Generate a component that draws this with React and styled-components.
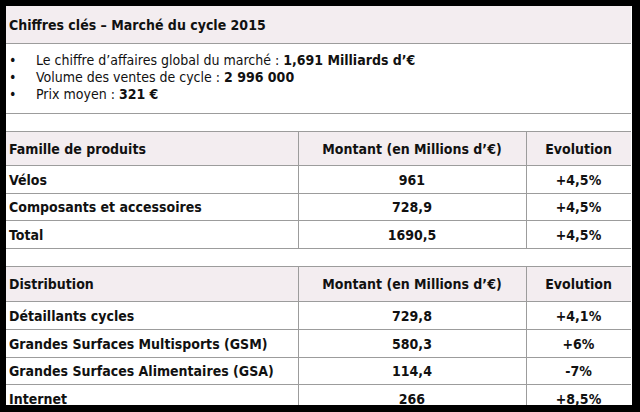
import React from "react";
import styled, { createGlobalStyle } from "styled-components";

const GlobalStyle = createGlobalStyle`
  html, body {
    margin: 0;
    padding: 0;
    background: #000;
  }
  body {
    width: 640px;
    height: 412px;
    overflow: hidden;
  }
`;

const Frame = styled.div`
  padding: 6px 8px 7px 6px;
  background: #000;
  height: 412px;
  box-sizing: border-box;
`;

const Clip = styled.div`
  height: 399px;
  overflow: hidden;
  background: #fff;
`;

const Sheet = styled.table`
  width: 626px;
  border-collapse: collapse;
  table-layout: fixed;
  background: #fff;
  font-family: "DejaVu Sans Condensed", "DejaVu Sans", Tahoma, sans-serif;
  font-size: 14px;
  color: #111;
`;

const Cell = styled.td`
  border: 1px solid #9c9c9c;
  padding: 0 3px;
  height: ${(p) => p.$h}px;
  font-weight: bold;
  text-align: ${(p) => (p.$center ? "center" : "left")};
  background: ${(p) => (p.$shade ? "#f3edf0" : "#fff")};
  white-space: nowrap;
  overflow: hidden;

  &:first-child {
    border-left: none;
  }
  &:last-child {
    border-right: 3px solid #fff;
  }
`;

const TitleCell = styled(Cell)`
  border-top: none;
`;

const InfoCell = styled(Cell)`
  vertical-align: top;
  padding-top: 8px;
`;

const BulletList = styled.ul`
  margin: 0;
  padding: 0;
  list-style: none;
  font-weight: normal;
  line-height: 17px;
`;

const Item = styled.li`
  display: flex;

  &::before {
    content: "•";
    width: 27px;
    flex: none;
  }
`;

const products = [
  ["Vélos", "961", "+4,5%", 27],
  ["Composants et accessoires", "728,9", "+4,5%", 26],
  ["Total", "1690,5", "+4,5%", 27],
];

const channels = [
  ["Détaillants cycles", "729,8", "+4,1%", 27],
  ["Grandes Surfaces Multisports (GSM)", "580,3", "+6%", 27],
  ["Grandes Surfaces Alimentaires (GSA)", "114,4", "-7%", 26],
  ["Internet", "266", "+8,5%", 27],
];

function Section({ label, rows, headH }) {
  return (
    <>
      <tr>
        <Cell $h={headH} $shade>{label}</Cell>
        <Cell $h={headH} $shade $center>Montant (en Millions d’€)</Cell>
        <Cell $h={headH} $shade $center>Evolution</Cell>
      </tr>
      {rows.map(([name, amount, evo, h]) => (
        <tr key={name}>
          <Cell $h={h}>{name}</Cell>
          <Cell $h={h} $center>{amount}</Cell>
          <Cell $h={h} $center>{evo}</Cell>
        </tr>
      ))}
    </>
  );
}

export default function App() {
  return (
    <>
      <GlobalStyle />
      <Frame>
        <Clip>
          <Sheet>
            <colgroup>
              <col style={{ width: 292 }} />
              <col style={{ width: 228 }} />
              <col style={{ width: 106 }} />
            </colgroup>
            <tbody>
              <tr>
                <TitleCell colSpan={3} $h={37} $shade>
                  Chiffres clés – Marché du cycle 2015
                </TitleCell>
              </tr>
              <tr>
                <InfoCell colSpan={3} $h={61}>
                  <BulletList>
                    <Item>
                      <span>
                        Le chiffre d’affaires global du marché : <b>1,691 Milliards d’€</b>
                      </span>
                    </Item>
                    <Item>
                      <span>
                        Volume des ventes de cycle : <b>2 996 000</b>
                      </span>
                    </Item>
                    <Item>
                      <span>
                        Prix moyen : <b>321 €</b>
                      </span>
                    </Item>
                  </BulletList>
                </InfoCell>
              </tr>
              <tr>
                <Cell colSpan={3} $h={17} />
              </tr>
              <Section label="Famille de produits" rows={products} headH={33} />
              <tr>
                <Cell colSpan={3} $h={17} />
              </tr>
              <Section label="Distribution" rows={channels} headH={34} />
            </tbody>
          </Sheet>
        </Clip>
      </Frame>
    </>
  );
}
